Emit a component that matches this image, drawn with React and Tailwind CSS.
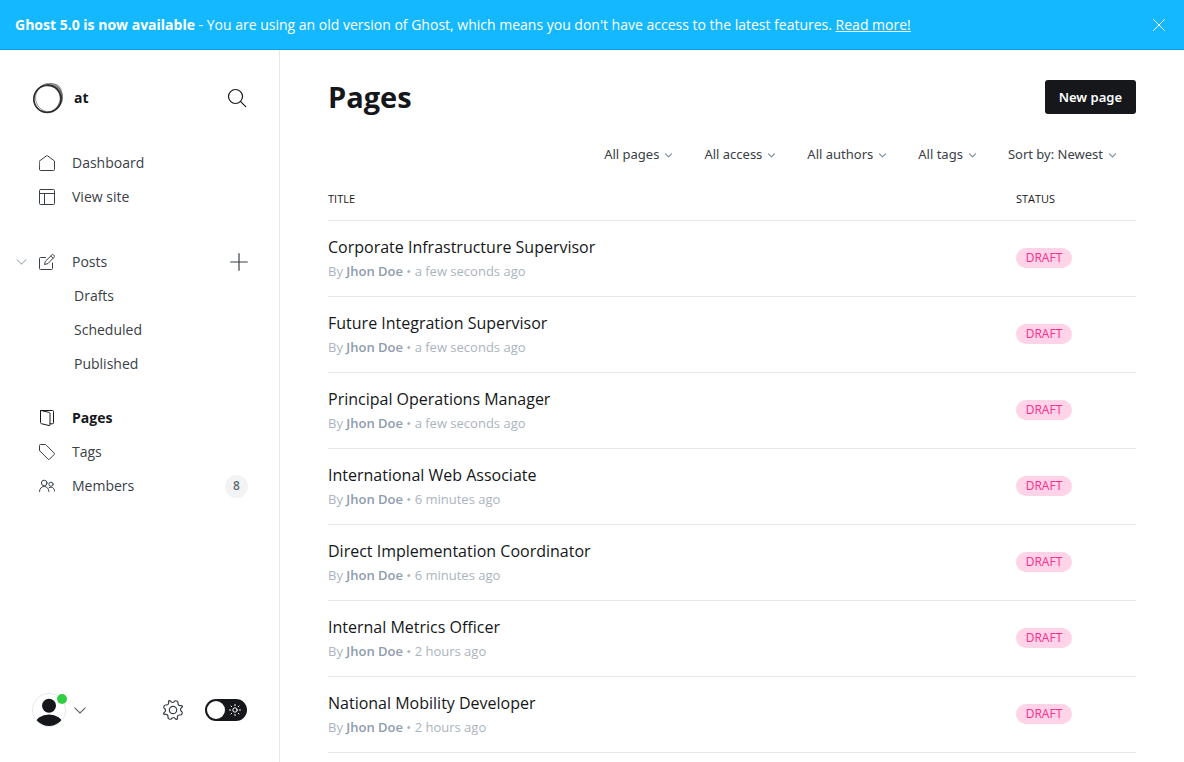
import React, { useState } from "react";

function Icon({ className = "", size = 16, box = 24, width = 1.5, children }) {
  return (
    <svg
      className={className}
      width={size}
      height={size}
      viewBox={`0 0 ${box} ${box}`}
      fill="none"
      stroke="currentColor"
      strokeWidth={width}
      strokeLinecap="round"
      strokeLinejoin="round"
      aria-hidden="true"
    >
      {children}
    </svg>
  );
}

const HomeIcon = () => (
  <Icon box={16} width={1}>
    <path d="M.5 6 7.3.9a1.2 1.2 0 0 1 1.4 0L15.5 6v8.500a1 1 0 0 1-1 1h-13a1 1 0 0 1-1-1z" />
  </Icon>
);
const LayoutIcon = () => (
  <Icon box={16} width={1}>
    <rect x=".5" y=".5" width="15" height="15" rx="1" />
    <path d="M.5 4.500h15M5.500 4.500v11" />
  </Icon>
);
const PostsIcon = () => (
  <Icon box={16} width={1}>
    <path d="M13.500 9v5.500a1 1 0 0 1-1 1h-11a1 1 0 0 1-1-1v-10a1 1 0 0 1 1-1h5" />
    <path d="M8.600 9.700 5.500 10.500l.8-3.100L12.900.9a1.200 1.200 0 0 1 1.700 0l.5.500a1.200 1.200 0 0 1 0 1.700z" />
    <path d="M11.800 2l2.200 2.200" />
  </Icon>
);
const PagesIcon = () => (
  <Icon box={16} width={1}>
    <path d="M2 .5h11.500a1 1 0 0 1 1 1v11.300a1 1 0 0 1-1 1h-2.500" />
    <path d="M2 .5 9.800 2.300a1.400 1.400 0 0 1 1.200 1.400v11a.8.8 0 0 1-1 .8L2.400 13.700a1.200 1.200 0 0 1-.9-1.200V1a.5.5 0 0 1 .5-.5z" />
  </Icon>
);
const TagIcon = () => (
  <Icon box={16} width={1}>
    <path d="M.5 6.200V1.500a1 1 0 0 1 1-1h4.700a1 1 0 0 1 .7.300l8.300 8.300a1 1 0 0 1 0 1.400l-4.700 4.700a1 1 0 0 1-1.400 0L.8 6.900a1 1 0 0 1-.3-.7z" />
  </Icon>
);
const MembersIcon = () => (
  <Icon box={16} width={1}>
    <circle cx="5.200" cy="5" r="2.800" />
    <path d="M.5 13.500c0-3 2-5 4.700-5s4.700 2 4.700 5" />
    <circle cx="12" cy="6.200" r="2.100" />
    <path d="M10.200 9.600c3-1.300 5.300.5 5.300 3.400" />
  </Icon>
);

function Chevron({ className, w, h, width = 1 }) {
  return (
    <svg
      className={className}
      width={w}
      height={h}
      viewBox="0 0 12 7"
      fill="none"
      stroke="currentColor"
      strokeWidth={width}
      strokeLinecap="round"
      strokeLinejoin="round"
      aria-hidden="true"
    >
      <path d="M.8.8 6 6 11.200.8" />
    </svg>
  );
}

function Logo() {
  return (
    <svg width="32" height="32" viewBox="0 0 32 32" fill="none" stroke="#15171a" aria-hidden="true">
      <path
        d="M15 2.500C21-.5 29 2 30 9c1.500 5 1.500 10-1.500 14-2 4-5 6-8.500 7 4-3 8-8 8-13.500C28 9.500 23 4 15 4z"
        fill="#15171a"
        stroke="none"
        opacity=".35"
      />
      <circle cx="15.500" cy="17" r="13.500" strokeWidth="1.500" opacity=".75" />
      <ellipse cx="15.500" cy="16.500" rx="14.300" ry="13.600" strokeWidth="1" opacity=".6" transform="rotate(-40 15.500 16.500)" />
      <ellipse cx="15" cy="16.500" rx="13" ry="13.800" strokeWidth="1" opacity=".45" transform="rotate(25 15 16.500)" />
      <ellipse cx="17" cy="15.500" rx="13.500" ry="14.300" strokeWidth=".8" opacity=".5" transform="rotate(10 17 15.500)" />
    </svg>
  );
}

function NavItem({ icon, label, active, children }) {
  return (
    <li className="flex h-[34px] items-center">
      <a
        href="#"
        className={
          active
            ? "flex flex-1 items-center gap-[17px] font-bold text-[#15171a]"
            : "flex flex-1 items-center gap-[17px] text-[#394047]"
        }
      >
        {icon}
        <span className="pb-0.5">{label}</span>
      </a>
      {children}
    </li>
  );
}

function SubItem({ label }) {
  return (
    <li className="flex h-[34px] items-center pl-[35px]">
      <a href="#" className="pb-0.5 text-[#394047]">{label}</a>
    </li>
  );
}

function Sidebar() {
  return (
    <aside className="flex w-[280px] shrink-0 flex-col border-r border-[#e6e9eb]">
      <div className="flex items-center gap-2.5 pt-8 pr-8 pl-8">
        <Logo />
        <span className="flex-1 pb-0.5 text-[14px] font-bold text-[#15171a]">at</span>
        <button type="button" aria-label="Search" className="text-[#15171a]">
          <Icon size={20} box={20} width={1.2}>
            <circle cx="8.500" cy="8.500" r="7" />
            <path d="m13.700 13.700 5 5" />
          </Icon>
        </button>
      </div>

      <nav className="flex-1 pt-8 pr-[31px] pl-[39px] text-[14px]">
        <ul>
          <NavItem icon={<HomeIcon />} label="Dashboard" />
          <NavItem icon={<LayoutIcon />} label="View site" />
        </ul>
        <div className="-ml-[23px] flex items-start pt-[31px]">
          <button type="button" aria-label="Collapse posts" className="flex h-[34px] w-[23px] items-center text-[#abb4be]">
            <Chevron w={11} h={6} width={1.2} />
          </button>
          <ul className="flex-1">
            <NavItem icon={<PostsIcon />} label="Posts">
              <button type="button" aria-label="New post" className="text-[#394047]">
                <Icon size={18} box={18} width={1.2}>
                  <path d="M9 .7v16.600M.7 9h16.600" />
                </Icon>
              </button>
            </NavItem>
            <SubItem label="Drafts" />
            <SubItem label="Scheduled" />
            <SubItem label="Published" />
          </ul>
        </div>
        <ul className="pt-5">
          <NavItem icon={<PagesIcon />} label="Pages" active />
          <NavItem icon={<TagIcon />} label="Tags" />
          <NavItem icon={<MembersIcon />} label="Members">
            <span className="flex size-[23px] items-center justify-center rounded-full bg-[#f1f3f4] text-[12px] font-semibold text-[#626d79]">
              8
            </span>
          </NavItem>
        </ul>
      </nav>

      <div className="flex items-center pr-8 pb-[35px] pl-8">
        <button type="button" aria-label="Account" className="relative flex items-center gap-2 text-[#5d6670]">
          <svg width="34" height="34" viewBox="0 0 34 34" aria-hidden="true">
            <defs>
              <clipPath id="avatar">
                <circle cx="17" cy="17" r="16" />
              </clipPath>
            </defs>
            <circle cx="17" cy="17" r="16.500" fill="#fff" stroke="#e6e9eb" />
            <g clipPath="url(#avatar)" fill="#15171a">
              <circle cx="17" cy="12.700" r="7" />
              <ellipse cx="17" cy="30.500" rx="13.500" ry="9" />
            </g>
          </svg>
          <span className="absolute top-px left-[25px] size-2.5 rounded-full bg-[#30cf43]" />
          <Chevron w={12} h={7} width={1.1} />
        </button>
        <a href="#" aria-label="Settings" className="ml-auto text-[#394047]">
          <Icon size={22} box={22} width={1.2}>
            <circle cx="11" cy="11" r="3.700" />
            <path d="m12.700 2 .5 1.200a1.900 1.900 0 0 0 2.600 1l1.200-.5c1-.4 1.700.3 1.300 1.300l-.5 1.200a1.900 1.900 0 0 0 1 2.600l1.200.5c1 .5 1 2.900 0 3.400l-1.200.5a1.900 1.900 0 0 0-1 2.600l.5 1.200c.4 1-.3 1.700-1.300 1.300l-1.200-.5a1.900 1.900 0 0 0-2.600 1l-.5 1.200c-.5 1-2.900 1-3.400 0l-.5-1.200a1.900 1.900 0 0 0-2.600-1l-1.200.5c-1 .4-1.700-.3-1.300-1.300l.5-1.200a1.900 1.900 0 0 0-1-2.600L2 12.700c-1-.5-1-2.900 0-3.400l1.200-.5a1.900 1.900 0 0 0 1-2.600L3.700 5c-.4-1 .3-1.700 1.300-1.300l1.200.5a1.900 1.900 0 0 0 2.600-1L9.300 2c.5-1 2.900-1 3.400 0z" transform="rotate(22.5 11 11)" />
          </Icon>
        </a>
        <label className="ml-[21px] flex h-[22px] w-[42px] cursor-pointer items-center justify-between rounded-full bg-[#15171a] pr-1.5 pl-0.5 text-white">
          <input type="checkbox" aria-label="Night shift" className="peer sr-only" />
          <span className="size-[18px] rounded-full bg-white" />
          <Icon size={12} box={12} width={1}>
            <circle cx="6" cy="6" r="2.200" />
            <path d="M6 .5v1.200M6 10.300v1.200M.5 6h1.200M10.300 6h1.200M2 2l.7.7M9.300 9.300l.7.7M2 10l.7-.7M9.300 2.700l.7-.7" />
          </Icon>
        </label>
      </div>
    </aside>
  );
}

const filters = ["All pages", "All access", "All authors", "All tags", "Sort by: Newest"];

function Filter({ label }) {
  return (
    <div className="relative flex items-center font-['Noto_Sans'] text-[#394047]">
      <select
        aria-label={label}
        className="appearance-none bg-transparent pr-[13px] text-[13px] leading-5 [field-sizing:content]"
      >
        <option>{label}</option>
      </select>
      <Chevron className="pointer-events-none absolute top-[9px] right-0 text-[#7c8b9a]" w={7} h={5} width={1.9} />
    </div>
  );
}

const rows = [
  ["Corporate Infrastructure Supervisor", "a few seconds ago"],
  ["Future Integration Supervisor", "a few seconds ago"],
  ["Principal Operations Manager", "a few seconds ago"],
  ["International Web Associate", "6 minutes ago"],
  ["Direct Implementation Coordinator", "6 minutes ago"],
  ["Internal Metrics Officer", "2 hours ago"],
  ["National Mobility Developer", "2 hours ago"],
];

function PagesTable() {
  return (
    <table className="mt-[25px] w-full table-fixed text-left">
      <thead>
        <tr className="h-[31px] border-b border-[#e6e9eb] align-top text-[11px] leading-4 text-[#15171a]">
          <th className="px-0 pt-0.5 pb-0 font-medium">TITLE</th>
          <th className="w-[120px] px-0 pt-0.5 pb-0 font-medium">STATUS</th>
        </tr>
      </thead>
      <tbody>
        {rows.map(([title, time]) => (
          <tr key={title} className="border-b border-[#e6e9eb]">
            <td className="px-0 pt-3.5 pb-[13px]">
              <a href="#" className="block">
                <h3 className="text-[16px] leading-6 font-medium text-[#15171a]">{title}</h3>
                <p className="text-[13px] leading-6 text-[#abb4be]">
                  By <span className="font-semibold text-[#8e9cac]">Jhon Doe</span> • {time}
                </p>
              </a>
            </td>
            <td className="px-0 pt-0 pb-px align-middle">
              <span className="flex h-5 w-14 items-center justify-center rounded-full bg-[#ffd3e8] text-[12px] text-[#fb2d8d]">
                DRAFT
              </span>
            </td>
          </tr>
        ))}
      </tbody>
    </table>
  );
}

export default function App() {
  const [banner, setBanner] = useState(true);
  return (
    <div className="flex min-h-screen flex-col bg-white font-['Open_Sans','Noto_Sans',sans-serif]">
      {banner && (
        <div className="flex items-center justify-between border-b border-[#0f9fe0] bg-[#14b8ff] px-[15px] py-[14px] text-[14px] leading-[21px] text-white">
          <p>
            <strong className="font-bold">Ghost 5.0 is now available</strong> - You are using an old version of Ghost,
            which means you don't have access to the latest features.{" "}
            <a href="#" className="underline">Read more!</a>
          </p>
          <button type="button" aria-label="Close" className="mr-1" onClick={() => setBanner(false)}>
            <Icon size={12} box={12} width={1}>
              <path d="m.5.5 11 11M11.500.5l-11 11" />
            </Icon>
          </button>
        </div>
      )}
      <div className="flex flex-1">
        <Sidebar />
        <main className="min-w-0 flex-1 px-12 pt-[30px]">
          <header className="flex items-center justify-between">
            <h1 className="text-[29px] leading-[34px] font-bold text-[#15171a]">Pages</h1>
            <button
              type="button"
              className="h-[34px] rounded-[3px] bg-[#15171a] px-3.5 pt-0.5 font-['Noto_Sans'] text-[13px] font-semibold text-white"
            >
              New page
            </button>
          </header>
          <div className="mt-[30px] flex justify-end gap-8 pr-5">
            {filters.map((f) => (
              <Filter key={f} label={f} />
            ))}
          </div>
          <PagesTable />
        </main>
      </div>
    </div>
  );
}
